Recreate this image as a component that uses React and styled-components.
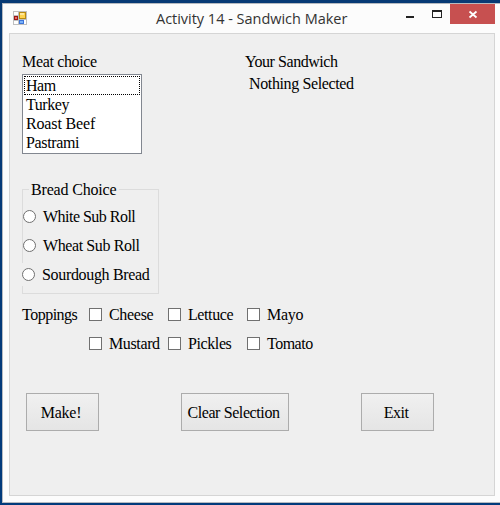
import React from "react";
import styled, { createGlobalStyle } from "styled-components";

const GlobalStyle = createGlobalStyle`
  * { box-sizing: border-box; }
  body { margin: 0; overflow: hidden; }
`;

const Desktop = styled.div`
  width: 500px;
  height: 505px;
  padding: 3px 0 2px 2px;
  background: linear-gradient(#073a75, #013a7b);
  overflow: hidden;
`;

const Window = styled.div`
  display: flex;
  flex-direction: column;
  width: 498px;
  height: 500px;
  border: solid #b6bac0;
  border-width: 1px 0 1px 1px;
  background: #fcfcfc;
`;

const TitleBar = styled.header`
  display: flex;
  height: 29px;
  flex: none;
  padding: 0 5px 0 10px;
`;

const AppIcon = styled.svg`
  width: 14px;
  height: 14px;
  margin-top: 7px;
  flex: none;
`;

const Title = styled.h1`
  flex: 1;
  margin: 0 0 0 129px;
  font: 400 14.5px/29px "Open Sans", "Noto Sans", sans-serif;
  letter-spacing: -0.02px;
  color: #333;
  white-space: nowrap;
`;

const Controls = styled.div`
  display: flex;
  flex: none;
`;

const ControlButton = styled.button`
  display: grid;
  place-items: center;
  width: ${(p) => (p.$close ? 45 : 27)}px;
  height: 20px;
  padding: 0;
  border: 0;
  background: ${(p) => (p.$close ? "#c75050" : "transparent")};
`;

const Client = styled.main`
  display: flex;
  flex-direction: column;
  width: 486px;
  height: 463px;
  margin-left: 6px;
  padding: 18px 12px 0;
  border: 1px solid #d5d5d5;
  background: #efefef;
  font: 16px/19px "Liberation Serif", "Times New Roman", serif;
  color: #000;
`;

const TopRow = styled.section`
  display: flex;
  height: 136px;
  flex: none;
`;

const MeatColumn = styled.div`
  width: 223px;
`;

const Text = styled.span`
  display: block;
  white-space: nowrap;
  letter-spacing: ${(p) => p.$track || 0}px;
`;

const ListBox = styled.ul`
  width: 120px;
  height: 80px;
  margin: 3px 0 0;
  padding: 1px;
  border: 1px solid #828790;
  background: #fff;
  list-style: none;
`;

const ListItem = styled.li`
  height: 19px;
  padding-left: 2px;
  letter-spacing: ${(p) => p.$track}px;
  outline: ${(p) => (p.$focused ? "1px dotted #000" : "none")};
  outline-offset: -1px;
`;

const Result = styled.div`
  display: flex;
  flex-direction: column;
  gap: 3px;
`;

const ResultValue = styled(Text)`
  padding-left: 4px;
`;

const BreadGroup = styled.fieldset`
  width: 137px;
  height: 114px;
  flex: none;
  margin: -8px 0 0;
  padding: 0;
  min-width: 0;
  border: 1px solid #dcdcdc;
`;

const Legend = styled.legend`
  height: 19px;
  margin-left: 6px;
  padding: 0 3px 0 2px;
  letter-spacing: -0.17px;
`;

const RadioList = styled.div`
  display: flex;
  flex-direction: column;
  gap: 6px;
  padding-top: 6px;
`;

const RadioRow = styled.label`
  display: flex;
  align-items: center;
  height: 23px;
  width: 132px;
  margin-left: ${(p) => (p.$wide ? -1 : 0)}px;
  gap: 7px;
  background: #efefef;
`;

const Radio = styled.input.attrs({ type: "radio", name: "bread" })`
  appearance: none;
  width: 13px;
  height: 13px;
  flex: none;
  margin: 0;
  border: 1px solid #707070;
  border-radius: 50%;
  background: #fff;
`;

const Toppings = styled.section`
  display: grid;
  grid-template-columns: 67px 79px 79px 79px;
  grid-auto-rows: 19px;
  row-gap: 10px;
  margin-top: 11px;
`;

const Check = styled.label`
  display: flex;
  align-items: center;
  gap: 7px;
  grid-column: ${(p) => p.$column};
`;

const Box = styled.input.attrs({ type: "checkbox" })`
  appearance: none;
  width: 13px;
  height: 13px;
  flex: none;
  margin: 0;
  border: 1px solid #707070;
  background: #fff;
`;

const Actions = styled.footer`
  display: flex;
  margin: 40px 0 0 4px;
`;

const ActionButton = styled.button`
  width: ${(p) => p.$width}px;
  height: 38px;
  margin-right: ${(p) => p.$after || 0}px;
  padding: 0 3px 0 0;
  border: 1px solid #acacac;
  background: linear-gradient(#f0f0f0, #e5e5e5);
  font: inherit;
  color: inherit;
  letter-spacing: ${(p) => p.$track || 0}px;
  white-space: nowrap;
`;

const meats = [
  { name: "Ham", track: -0.5 },
  { name: "Turkey", track: -0.45 },
  { name: "Roast Beef", track: -0.15 },
  { name: "Pastrami", track: -0.35 },
];

const breads = [
  { name: "White Sub Roll", track: -0.52 },
  { name: "Wheat Sub Roll", track: -0.4 },
  { name: "Sourdough Bread", track: -0.33 },
];

const toppings = [
  { name: "Cheese", track: -0.3 },
  { name: "Lettuce", track: -0.4 },
  { name: "Mayo", track: -0.3 },
  { name: "Mustard", track: -0.37 },
  { name: "Pickles", track: -0.4 },
  { name: "Tomato", track: -0.5 },
];

export default function App() {
  return (
    <>
      <GlobalStyle />
      <Desktop>
        <Window>
          <TitleBar>
            <AppIcon viewBox="0 0 14 14" shapeRendering="crispEdges">
              <path fill="#bfbfbf" d="M0 0h14v14H0z" />
              <path fill="#fff" d="M1 1h4v3H1zM1 10h4v3H1zM6 9h6v4H6zM12 9h1v4h-1z" />
              <path fill="#b98a12" d="M6 1h7v7H6z" />
              <path fill="#ffd34e" d="M7 2h5v5H7z" />
              <path fill="#ffe79a" d="M7 2h4v2H7z" />
              <path fill="#9c1717" d="M1 5h4v4H1z" />
              <path fill="#e86c60" d="M2 6h2v2H2z" />
              <path fill="#3d74d8" d="M6 9h5v4H6z" />
              <path fill="#7ab2fa" d="M7 10h3v2H7z" />
            </AppIcon>
            <Title>Activity 14 - Sandwich Maker</Title>
            <Controls>
              <ControlButton aria-label="Minimize">
                <svg width="27" height="20" shapeRendering="crispEdges">
                  <path fill="#222" d="M10 12h8v2h-8z" />
                </svg>
              </ControlButton>
              <ControlButton aria-label="Maximize">
                <svg width="27" height="20" shapeRendering="crispEdges">
                  <path fill="#222" fillRule="evenodd" d="M9 6h10v8H9zM10 8v5h8V8z" />
                </svg>
              </ControlButton>
              <ControlButton $close aria-label="Close">
                <svg width="45" height="20">
                  <path stroke="#fff" strokeWidth="1.8" d="M19.5 7.5l7 6M26.5 7.5l-7 6" />
                </svg>
              </ControlButton>
            </Controls>
          </TitleBar>
          <Client>
            <TopRow>
              <MeatColumn>
                <Text $track={-0.35}>Meat choice</Text>
                <ListBox>
                  {meats.map((meat, i) => (
                    <ListItem key={meat.name} $focused={i === 0} $track={meat.track}>
                      {meat.name}
                    </ListItem>
                  ))}
                </ListBox>
              </MeatColumn>
              <Result>
                <Text $track={-0.45}>Your Sandwich</Text>
                <ResultValue $track={-0.37}>Nothing Selected</ResultValue>
              </Result>
            </TopRow>
            <BreadGroup>
              <Legend>Bread Choice</Legend>
              <RadioList>
                {breads.map((bread, i) => (
                  <RadioRow key={bread.name} $wide={i === 2}>
                    <Radio />
                    <Text $track={bread.track}>{bread.name}</Text>
                  </RadioRow>
                ))}
              </RadioList>
            </BreadGroup>
            <Toppings>
              <Text $track={-0.5}>Toppings</Text>
              {toppings.map((topping, i) => (
                <Check key={topping.name} $column={(i % 3) + 2}>
                  <Box />
                  <Text $track={topping.track}>{topping.name}</Text>
                </Check>
              ))}
            </Toppings>
            <Actions>
              <ActionButton $width={73} $after={82} $track={-0.25}>Make!</ActionButton>
              <ActionButton $width={108} $after={72} $track={-0.4}>Clear Selection</ActionButton>
              <ActionButton $width={73} $track={-0.5}>Exit</ActionButton>
            </Actions>
          </Client>
        </Window>
      </Desktop>
    </>
  );
}
